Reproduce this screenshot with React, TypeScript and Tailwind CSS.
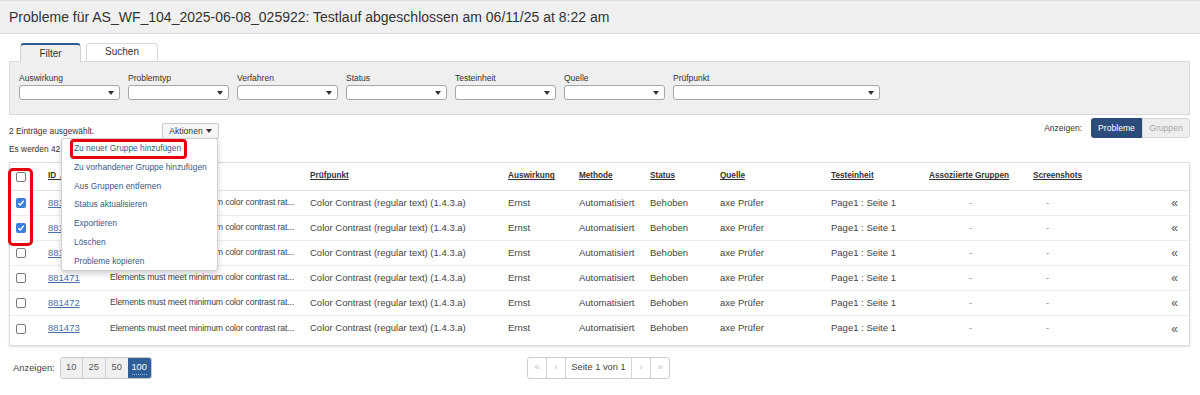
import React from "react";

const FONT = "font-['Liberation_Sans',Arial,sans-serif]";

function Tri() {
  return (
    <svg width="6" height="4" viewBox="0 0 6 4" className="block">
      <path d="M0 0 L6 0 L3 4 Z" fill="#333" />
    </svg>
  );
}

function Select({ label, w }: { label: string; w: string }) {
  return (
    <div className={`flex flex-col ${w}`}>
      <div className="h-[10px] leading-[10px] text-[8.5px] text-[#333]">{label}</div>
      <div className="mt-[2px] h-[15px] bg-white border border-[#a6a6a6] rounded-[3px] flex items-center justify-end pr-[5px]">
        <Tri />
      </div>
    </div>
  );
}

function Check({ checked }: { checked?: boolean }) {
  if (checked) {
    return (
      <span className="w-[10px] h-[10px] rounded-[2px] bg-[#3b7ddd] flex items-center justify-center">
        <svg width="8" height="8" viewBox="0 0 8 8">
          <path d="M1.3 4.2 L3.2 6 L6.7 1.8" stroke="white" strokeWidth="1.5" fill="none" />
        </svg>
      </span>
    );
  }
  return <span className="w-[10px] h-[10px] rounded-[2px] border border-[#7a7a7a] bg-white block" />;
}

const COLS =
  "grid grid-cols-[31px_61px_200px_198px_71px_71px_70px_111px_98px_104px_76px_1fr]";

const rows = [
  { id: "881468", checked: true },
  { id: "881469", checked: true },
  { id: "881470", checked: false },
  { id: "881471", checked: false },
  { id: "881472", checked: false },
  { id: "881473", checked: false },
];

const menuItems = [
  "Zu neuer Gruppe hinzufügen",
  "Zu vorhandener Gruppe hinzufügen",
  "Aus Gruppen entfernen",
  "Status aktualisieren",
  "Exportieren",
  "Löschen",
  "Probleme kopieren",
];

export default function App() {
  return (
    <div className={`w-[1200px] h-[395px] bg-white overflow-hidden text-[#333] ${FONT}`}>
      {/* Header */}
      <div className="h-[34px] bg-[#f0f0f0] border-t border-b border-[#dedede] flex items-center pl-[9px]">
        <h1 className="text-[14px] text-[#333] leading-none">
          Probleme für AS_WF_104_2025-06-08_025922: Testlauf abgeschlossen am 06/11/25 at 8:22 am
        </h1>
      </div>

      <div className="pl-[9px] pr-[10px]">
        {/* Tabs */}
        <div className="flex items-end gap-[5px] pl-[11px] mt-[8px]">
          <div className="w-[61px] h-[19px] bg-[#f0f0f0] border-t-[2px] border-t-[#2f5b8e] border-x border-x-[#d0d0d0] rounded-t-[4px] flex items-center justify-center text-[10px] text-[#333] relative top-[1px]">
            Filter
          </div>
          <div className="w-[72px] h-[18px] bg-white border-t border-x border-[#d8d8d8] rounded-t-[4px] flex items-start justify-center pt-[3px] text-[10px] text-[#333] leading-[10px]">
            Suchen
          </div>
        </div>

        {/* Filter panel */}
        <div className="h-[54px] bg-[#efefef] border border-[#dadada] pt-[11px] pl-[9px]">
          <div className="flex gap-[8px]">
            <Select label="Auswirkung" w="w-[101px]" />
            <Select label="Problemtyp" w="w-[101px]" />
            <Select label="Verfahren" w="w-[101px]" />
            <Select label="Status" w="w-[101px]" />
            <Select label="Testeinheit" w="w-[101px]" />
            <Select label="Quelle" w="w-[101px]" />
            <Select label="Prüfpunkt" w="w-[207px]" />
          </div>
        </div>

        {/* Action row */}
        <div className="relative mt-[3px] h-[20px] flex justify-between">
          <div className="flex items-center pt-[5px] h-[21px]">
            <div className="w-[153px] text-[8.4px] text-[#333]">2 Einträge ausgewählt.</div>
            <div className="h-[16px] w-[57px] bg-[#f6f6f6] border border-[#c8c8c8] rounded-[2px] flex items-center justify-center gap-[3px] text-[8.6px] text-[#333]">
              Aktionen
              <Tri />
            </div>
          </div>
          <div className="flex items-center">
            <span className="text-[8.5px] text-[#333] mr-[9px]">Anzeigen:</span>
            <div className="flex h-[20px]">
              <div className="w-[51px] bg-[#2c4c7c] text-white text-[8.6px] rounded-l-[3px] flex items-center justify-center">
                Probleme
              </div>
              <div className="w-[48px] bg-[#eeeeee] border border-[#d6d6d6] text-[#a8a8a8] text-[8.6px] rounded-r-[3px] flex items-center justify-center">
                Gruppen
              </div>
            </div>
          </div>

          {/* Dropdown menu */}
          <div className="absolute left-[52px] top-[20px] w-[157px] h-[133px] bg-white border border-[#cfcfcf] rounded-[3px] shadow-[0_3px_6px_rgba(0,0,0,0.18)] z-20">
            {menuItems.map((m) => (
              <div key={m} className="h-[18.8px] flex items-center pl-[12px] text-[8.4px] text-[#35598c]">
                {m}
              </div>
            ))}
            <div className="absolute left-[8px] top-[0px] w-[117px] h-[20px] border-[3px] border-[#e8000e] rounded-[4px]" />
          </div>
        </div>

        <div className="mt-[5px] h-[12px] leading-[12px] text-[8.4px] text-[#333]">
          Es werden 42 Probleme angezeigt.
        </div>

        {/* Table */}
        <div className="relative mt-[7px] border border-[#dcdcdc] pb-[4px] shadow-[0_1px_2px_rgba(0,0,0,0.12)]">
          <div className={`${COLS} h-[28px] items-center border-b border-[#e2e2e2] text-[8.2px] font-bold text-[#333]`}>
            <div className="pl-[6px]">
              <Check />
            </div>
            <div className="pl-[7px] underline">ID ▲</div>
            <div className="pl-[8px] underline">Beschreibung</div>
            <div className="pl-[8px] underline">Prüfpunkt</div>
            <div className="pl-[8px] underline">Auswirkung</div>
            <div className="pl-[8px] underline">Methode</div>
            <div className="pl-[8px] underline">Status</div>
            <div className="pl-[8px] underline">Quelle</div>
            <div className="pl-[8px] underline">Testeinheit</div>
            <div className="pl-[8px] underline">Assoziierte Gruppen</div>
            <div className="pl-[8px] underline">Screenshots</div>
            <div />
          </div>
          {rows.map((r, i) => (
            <div
              key={r.id}
              className={`${COLS} h-[25px] items-center text-[9.5px] text-[#444] ${i < rows.length - 1 ? "border-b border-[#eeeeee]" : ""}`}
            >
              <div className="pl-[6px]">
                <Check checked={r.checked} />
              </div>
              <div className="pl-[7px] text-[#4a72a8] underline">{r.id}</div>
              <div className="pl-[8px] whitespace-nowrap overflow-hidden text-[8.7px] tracking-[-0.15px]">
                Elements must meet minimum color contrast rat...
              </div>
              <div className="pl-[8px] whitespace-nowrap">Color Contrast (regular text) (1.4.3.a)</div>
              <div className="pl-[8px]">Ernst</div>
              <div className="pl-[8px]">Automatisiert</div>
              <div className="pl-[8px]">Behoben</div>
              <div className="pl-[8px]">axe Prüfer</div>
              <div className="pl-[8px] whitespace-nowrap">Page1 : Seite 1</div>
              <div className="pl-[48px] text-[#888]">-</div>
              <div className="pl-[21px] text-[#888]">-</div>
              <div className="flex justify-end pr-[11px] text-[12px] text-[#555] leading-none">«</div>
            </div>
          ))}
          <div className="absolute left-[-2px] top-[5px] w-[25px] h-[78px] border-[3px] border-[#e8000e] rounded-[5px]" />
        </div>

        {/* Footer */}
        <div className="mt-[11px] grid grid-cols-[1fr_auto_1fr] items-center h-[22px]">
          <div className="flex items-center pl-[4px]">
            <span className="text-[9.4px] text-[#444] mr-[5px]">Anzeigen:</span>
            <div className="flex h-[22px] border border-[#c9c9c9] rounded-[3px] overflow-hidden text-[9.3px]">
              <div className="w-[22px] bg-[#f0f0f0] border-r border-[#cfcfcf] flex items-center justify-center text-[#555]">10</div>
              <div className="w-[23px] bg-[#f0f0f0] border-r border-[#cfcfcf] flex items-center justify-center text-[#555]">25</div>
              <div className="w-[22px] bg-[#f0f0f0] flex items-center justify-center text-[#555]">50</div>
              <div className="w-[23px] bg-[#2f5e98] flex items-center justify-center text-white relative">
                100
                <span className="absolute left-[4px] right-[4px] bottom-[3px] border-b border-dotted border-[#9fb6d6]" />
              </div>
            </div>
          </div>
          <div className="flex h-[22px] border border-[#cfcfcf] rounded-[3px] overflow-hidden text-[9.3px] -ml-[2px]">
            <div className="w-[19px] border-r border-[#d6d6d6] flex items-center justify-center text-[#bbb]">«</div>
            <div className="w-[19px] border-r border-[#d6d6d6] flex items-center justify-center text-[#bbb]">‹</div>
            <div className="w-[66px] border-r border-[#d6d6d6] flex items-center justify-center text-[#444]">Seite 1 von 1</div>
            <div className="w-[19px] border-r border-[#d6d6d6] flex items-center justify-center text-[#bbb]">›</div>
            <div className="w-[18px] flex items-center justify-center text-[#bbb]">»</div>
          </div>
          <div />
        </div>
      </div>
    </div>
  );
}
